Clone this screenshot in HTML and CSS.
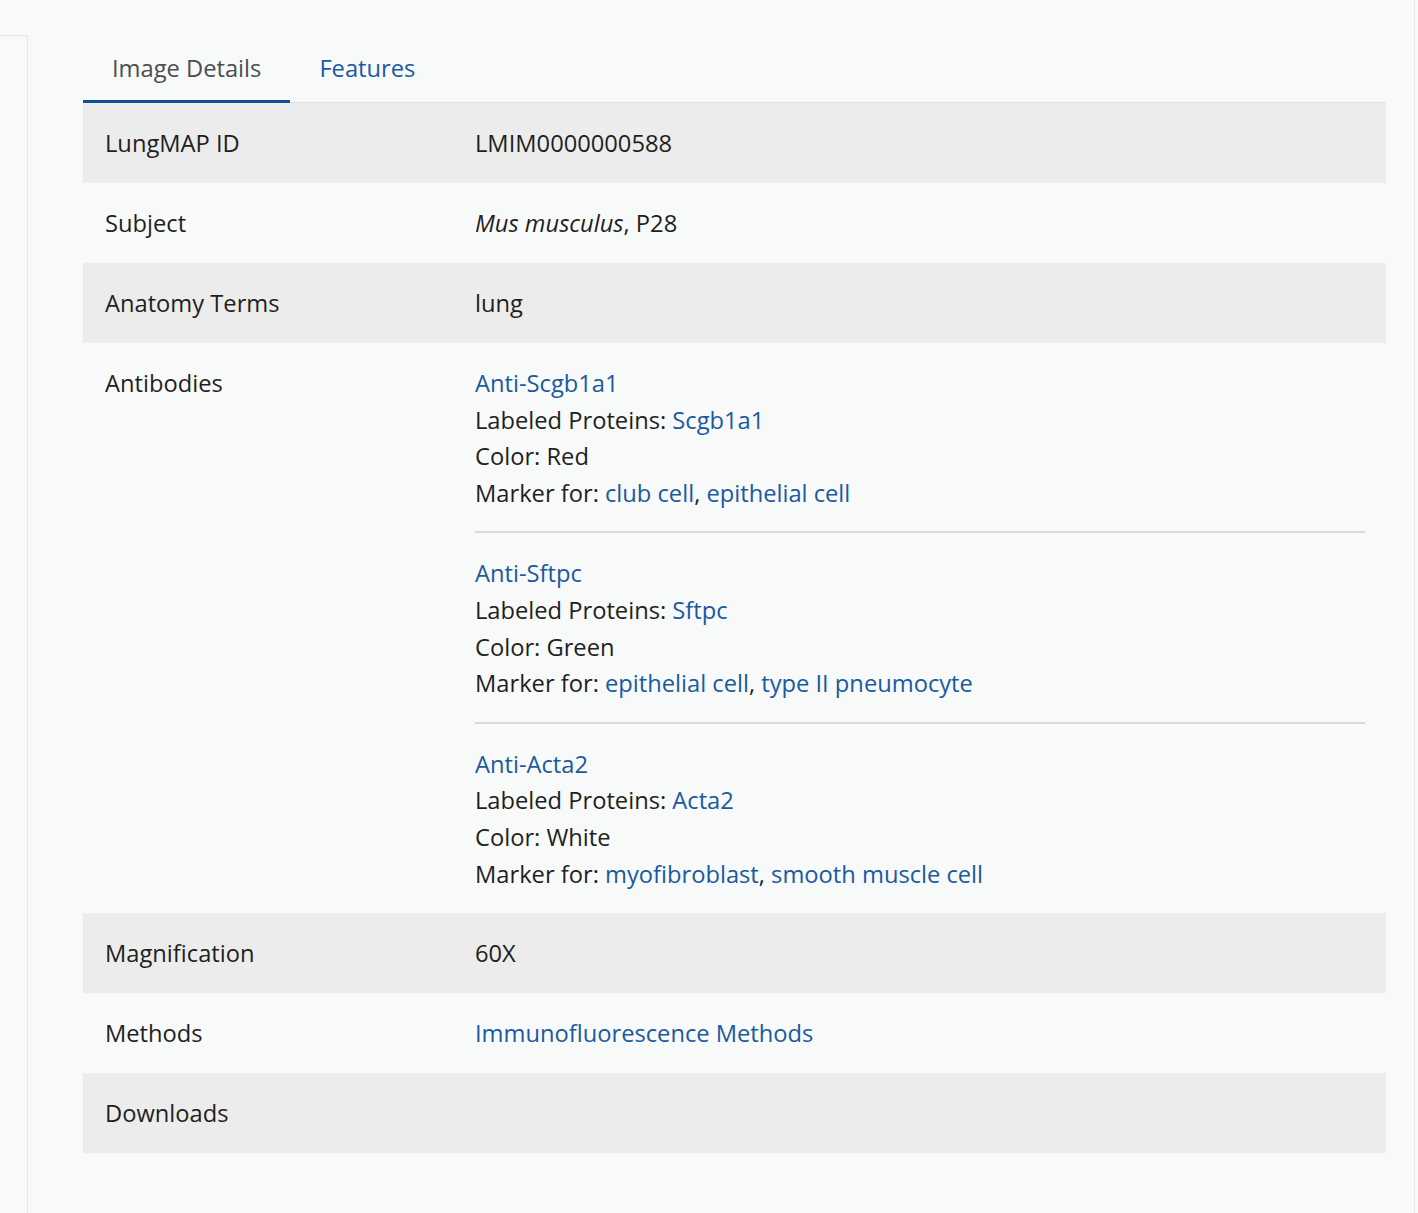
FILE: index.html
```html
<!DOCTYPE html>
<html lang="en">
<head>
<meta charset="utf-8">
<title>Image Details</title>
<link rel="stylesheet" href="styles.css">
</head>
<body>
<div class="page">
  <aside class="sidebar"></aside>
  <main class="main">
    <nav class="tabs">
      <a class="tab active">Image Details</a>
      <a class="tab">Features</a>
    </nav>
    <div class="details">
      <div class="row shaded">
        <div class="label">LungMAP ID</div>
        <div class="value">LMIM0000000588</div>
      </div>
      <div class="row">
        <div class="label">Subject</div>
        <div class="value"><em>Mus musculus</em>, P28</div>
      </div>
      <div class="row shaded">
        <div class="label">Anatomy Terms</div>
        <div class="value">lung</div>
      </div>
      <div class="row tall">
        <div class="label">Antibodies</div>
        <div class="value">
          <div class="antibody">
            <a class="link">Anti-Scgb1a1</a>
            <div>Labeled Proteins: <a class="link">Scgb1a1</a></div>
            <div>Color: Red</div>
            <div>Marker for: <a class="link">club cell</a>, <a class="link">epithelial cell</a></div>
          </div>
          <div class="antibody">
            <a class="link">Anti-Sftpc</a>
            <div>Labeled Proteins: <a class="link">Sftpc</a></div>
            <div>Color: Green</div>
            <div>Marker for: <a class="link">epithelial cell</a>, <a class="link">type II pneumocyte</a></div>
          </div>
          <div class="antibody">
            <a class="link">Anti-Acta2</a>
            <div>Labeled Proteins: <a class="link">Acta2</a></div>
            <div>Color: White</div>
            <div>Marker for: <a class="link">myofibroblast</a>, <a class="link">smooth muscle cell</a></div>
          </div>
        </div>
      </div>
      <div class="row shaded">
        <div class="label">Magnification</div>
        <div class="value">60X</div>
      </div>
      <div class="row">
        <div class="label">Methods</div>
        <div class="value"><a class="link">Immunofluorescence Methods</a></div>
      </div>
      <div class="row shaded">
        <div class="label">Downloads</div>
        <div class="value"></div>
      </div>
    </div>
  </main>
</div>
</body>
</html>
```
FILE: styles.css
```css
html, body {
  margin: 0;
  padding: 0;
  background: #f8f9f9;
}
body {
  font-family: "Open Sans", "Noto Sans", sans-serif;
  font-size: 23.7px;
  color: #1f1f1f;
}
.page {
  display: flex;
  min-height: 1213px;
  width: 1415px;
}
.sidebar {
  width: 27px;
  margin-top: 35px;
  border-top: 1px solid #e4e6e8;
  border-right: 1px solid #e4e6e8;
  flex: none;
}
.main {
  flex: 1;
  padding: 34px 28px 0 55px;
  border-right: 1px solid #e8eaec;
}
.tabs {
  display: flex;
  border-bottom: 1px solid #dfe4ea;
}
.tab {
  display: block;
  padding: 16px 29px 14px;
  line-height: 36px;
  color: #1a5aa0;
  border-bottom: 3px solid transparent;
  margin-bottom: -1px;
  cursor: pointer;
}
.tab.active {
  color: #4b4e52;
  border-bottom-color: #0d4d9a;
}
.row {
  display: grid;
  grid-template-columns: 392px 1fr;
  line-height: 36px;
}
.row.shaded {
  background: #ececec;
}
.label {
  padding: 22px 0 22px 22px;
}
.value {
  padding: 22px 21px 22px 0;
}
.row.tall .value {
  padding-bottom: 21px;
}
.antibody {
  line-height: 36.6px;
  padding: 0 0 20px;
  border-bottom: 2px solid #dadada;
  margin-bottom: 22px;
}
.antibody:last-child {
  border-bottom: none;
  padding-bottom: 0;
  margin-bottom: 0;
}
.antibody .link {
  display: block;
}
.antibody div .link {
  display: inline;
}
.link {
  color: #1a5aa0;
  text-decoration: none;
  cursor: pointer;
}
em {
  font-style: italic;
}
```
